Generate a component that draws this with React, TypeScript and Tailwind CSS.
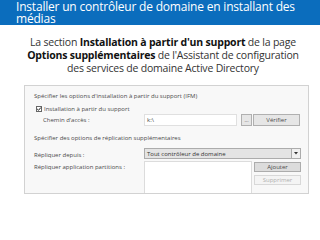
import React from "react";

export default function App() {
  const f = { fontFamily: '"Open Sans", "Noto Sans", sans-serif' };
  return (
    <div className="w-[320px] h-[240px] bg-white overflow-hidden relative" style={f}>
      <div className="h-[25px] bg-[#0b6dbd] pl-[16px] pt-[1px] text-white text-[12px] leading-[12px] tracking-[-0.2px]">
        <div>Installer un contrôleur de domaine en installant des</div>
        <div>médias</div>
      </div>
      <div className="mt-[11px] pl-[6px] text-center text-[10.5px] leading-[13px] text-[#333333] tracking-[-0.2px]">
        La section <b className="font-bold text-[#111]">Installation à partir d'un support</b> de la page
        <br />
        <b className="font-bold text-[#111]">Options supplémentaires</b> de l'Assistant de configuration
        <br />
        des services de domaine Active Directory
      </div>
      <div className="mt-[10px] ml-[24px] w-[285px] h-[109px] border border-[#d2d2d2] bg-[#f8f8f8] overflow-hidden flex flex-col pl-[9px] text-[6px] leading-[8px] text-[#4a4a4a]">
        <div className="mt-[6px]">Spécifier les options d'installation à partir du support (IFM)</div>
        <div className="mt-[5px] flex items-center ml-[2px]">
          <div className="w-[6px] h-[6px] border border-[#666] bg-white relative">
            <svg width="6" height="6" viewBox="0 0 6 6" className="absolute -left-[1px] -top-[1px]">
              <path d="M1.2 3 L2.5 4.3 L4.9 1.5" stroke="#1a1a1a" strokeWidth="1" fill="none" />
            </svg>
          </div>
          <span className="ml-[2px]">Installation à partir du support</span>
        </div>
        <div className="mt-[1px] flex items-center h-[12px]">
          <div className="w-[110px] pl-[9px]">Chemin d'accès :</div>
          <div className="w-[93px] h-[12px] bg-white border border-[#e0e0e0] pl-[2px] flex items-center">k:\</div>
          <div className="ml-[4px] w-[11px] h-[12px] bg-[#e6e6e6] border border-[#b0b0b0] flex items-center justify-center text-[5px]">...</div>
          <div className="ml-[1px] w-[47px] h-[12px] bg-[#e6e6e6] border border-[#b0b0b0] flex items-center justify-center">Vérifier</div>
        </div>
        <div className="mt-[8px]">Spécifier des options de réplication supplémentaires</div>
        <div className="mt-[6px] flex h-[11px]">
          <div className="w-[110px] pt-[3px]">Répliquer depuis :</div>
          <div className="w-[157px] h-[11px] bg-[#e4e4e4] border border-[#acacac] flex items-center">
            <span className="flex-1 pl-[2px] text-[#333]">Tout contrôleur de domaine</span>
            <div className="w-[9px] h-full border-l border-[#acacac] bg-[#f0f0f0] flex items-center justify-center">
              <svg width="4" height="3" viewBox="0 0 4 3">
                <path d="M0 0 L4 0 L2 2.5 Z" fill="#333" />
              </svg>
            </div>
          </div>
        </div>
        <div className="mt-[2px] flex flex-1">
          <div className="w-[110px] pt-[2px]">Répliquer application partitions :</div>
          <div className="w-[108px] bg-white border border-[#dcdcdc] border-b-0"></div>
          <div className="ml-[2px] flex flex-col">
            <div className="mt-[1px] w-[47px] h-[10px] bg-[#dcdcdc] border border-[#acacac] flex items-center justify-center">Ajouter</div>
            <div className="mt-[3px] w-[47px] h-[10px] bg-[#f4f4f4] border border-[#d8d8d8] text-[#b0b0b0] flex items-center justify-center">Supprimer</div>
          </div>
        </div>
      </div>
    </div>
  );
}
